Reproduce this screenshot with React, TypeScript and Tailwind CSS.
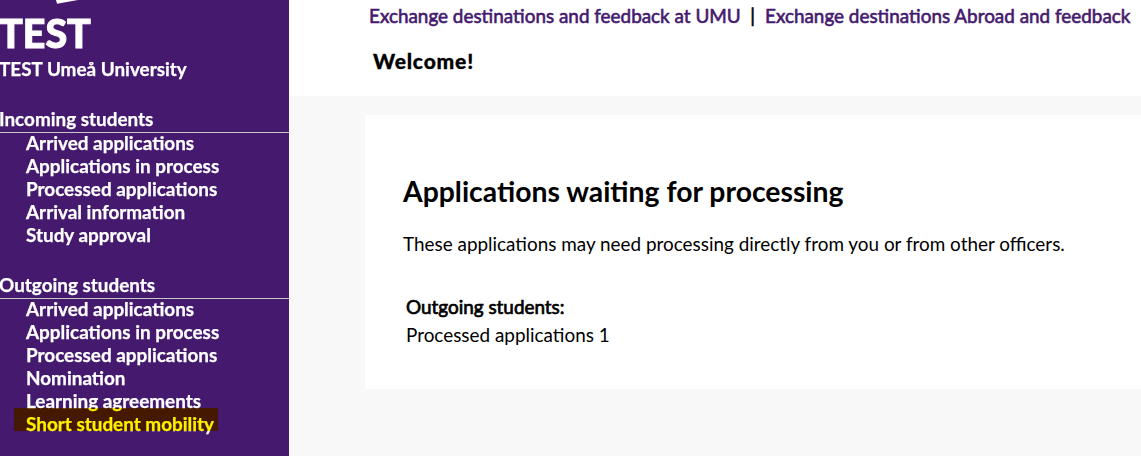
import React from 'react';

interface MenuSection {
  title: string;
  items: string[];
}

const sections: MenuSection[] = [
  {
    title: 'Incoming students',
    items: [
      'Arrived applications',
      'Applications in process',
      'Processed applications',
      'Arrival information',
      'Study approval'
    ]
  },
  {
    title: 'Outgoing students',
    items: [
      'Arrived applications',
      'Applications in process',
      'Processed applications',
      'Nomination',
      'Learning agreements',
      'Short student mobility'
    ]
  }
];

const activeItem = 'Short student mobility';

const Sidebar: React.FC = () => (
  <aside className="isolate w-[289px] shrink-0 bg-[#451a6e] text-white font-bold text-[18.9px] leading-[23px] [-webkit-text-stroke:0.25px]">
    <svg className="block h-[8px] w-[100px]" viewBox="0 0 100 8">
      <path d="M56 0 L78 0 L57 3.8 Z" fill="#fff" />
    </svg>
    <h1 className="-ml-px h-[49px] pt-px text-[39.4px] font-black leading-[47px] [-webkit-text-stroke:1px]">TEST</h1>
    <p className="-ml-px h-[50px]">TEST Umeå University</p>
    {sections.map(section => (
      <nav key={section.title} className="mb-[25px]">
        <h2 className="h-[26px] border-b border-[#c8c8c8] -indent-px">{section.title}</h2>
        <ul>
          {section.items.map(item => (
            <li key={item} className="relative h-[23px] pl-[26px] leading-[19px]">
              <a href="#">{item}</a>
              {/* marker pen over the active link */}
              {item === activeItem && (
                <span className="absolute left-[14px] top-[-6px] h-[23px] w-[204px] bg-[#fff000] mix-blend-multiply" />
              )}
            </li>
          ))}
        </ul>
      </nav>
    ))}
  </aside>
);

export default function App() {
  return (
    <div className="flex h-[456px] w-[1141px] overflow-hidden bg-[#f8f8f8] font-['Lato',sans-serif] text-black">
      <Sidebar />
      <div className="flex-1">
        <header className="h-[96px] bg-white pl-[80px] pt-[4px]">
          <div className="flex whitespace-nowrap text-[18.9px] leading-[23px] text-[#451a6e] [-webkit-text-stroke:0.6px]">
            <a href="#">Exchange destinations and feedback at UMU</a>
            <span className="pl-[9.5px] pr-[10px] text-black">|</span>
            <a href="#">Exchange destinations Abroad and feedback</a>
          </div>
          <h2 className="pl-[4px] pt-[21px] text-[21px] font-black leading-[26px] tracking-[0.8px] [-webkit-text-stroke:0.3px]">Welcome!</h2>
        </header>
        <main className="ml-[76px] mt-[19px] h-[274px] bg-white pl-[38px] pt-[59px]">
          <h2 className="text-[28.35px] font-bold leading-[34px]">Applications waiting for processing</h2>
          <p className="pt-[24px] text-[18.9px] leading-[23px]">
            These applications may need processing directly from you or from other officers.
          </p>
          <div className="pl-[3px] pt-[38px] text-[18.9px] leading-[28px]">
            <p className="[-webkit-text-stroke:0.7px]">Outgoing students:</p>
            <p>Processed applications 1</p>
          </div>
        </main>
      </div>
    </div>
  );
}
